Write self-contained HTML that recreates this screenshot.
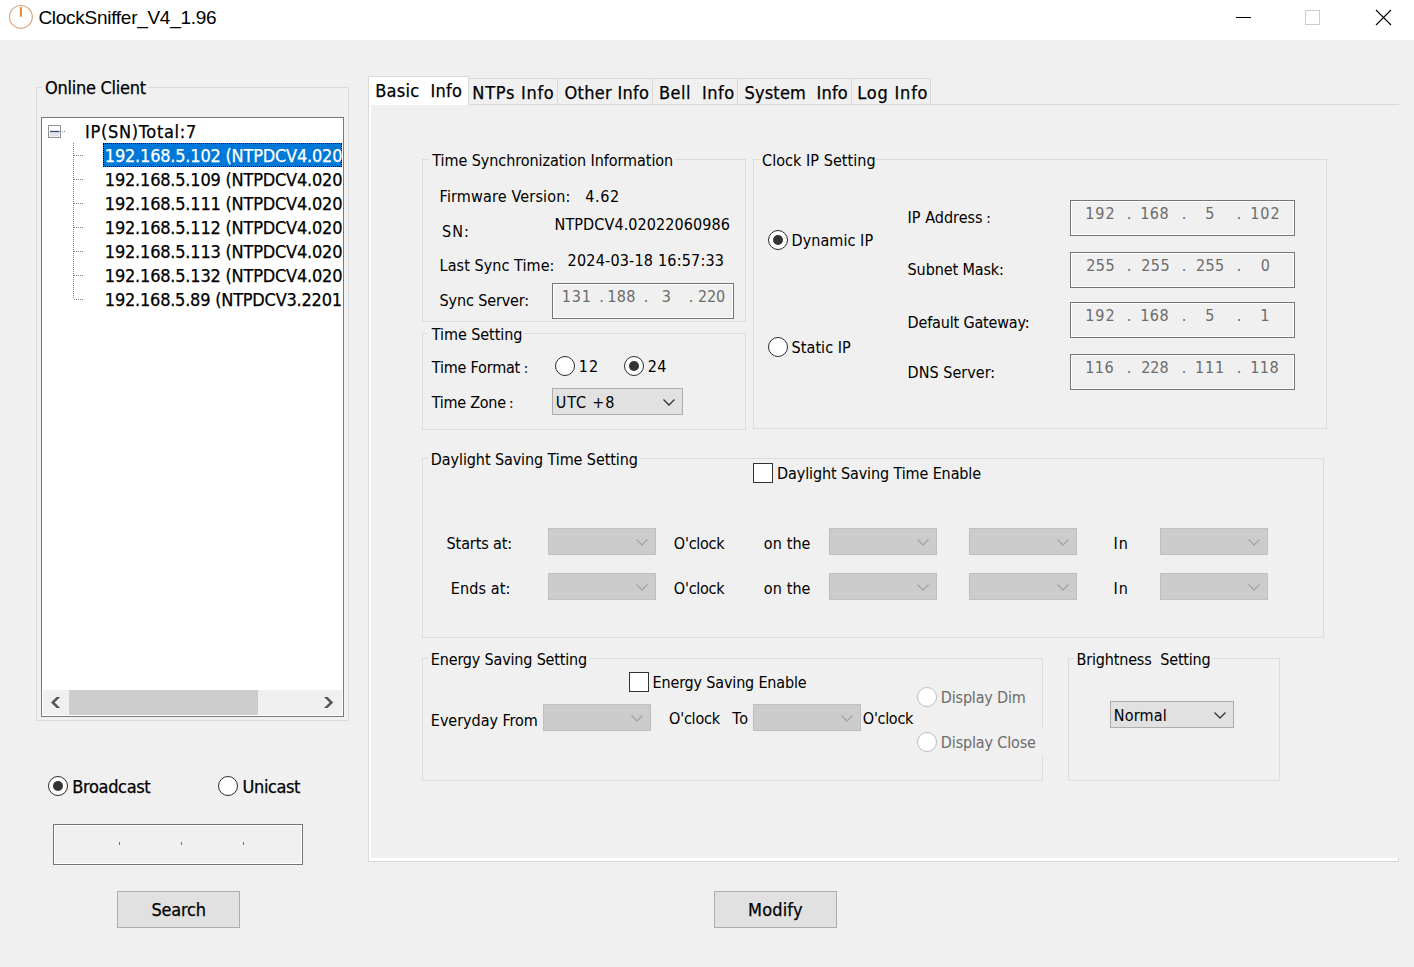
<!DOCTYPE html>
<html lang="en"><head><meta charset="utf-8"><title>ClockSniffer_V4_1.96</title>
<style>
html,body{margin:0;padding:0}
body{width:1414px;height:967px;overflow:hidden;background:#f0f0f0;position:relative;font-family:'DejaVu Sans Condensed','Liberation Sans',sans-serif}
.abs,.t,.grp,.cut,.radio,.chk,.combo,.ipbox,.btn,.tab,.line,.tree,.sel,.titlebar,.sb,.thumb{position:absolute;box-sizing:border-box}
.t{white-space:pre;line-height:24px}
.titlebar{left:0;top:0;width:1414px;height:40px;background:#fff}
.grp{border:1px solid #dcdcdc}
.cut{background:#f0f0f0}
.radio{width:20px;height:20px;border-radius:50%;border:1.25px solid #2b2b2b;background:#fff}
.radio.on::after{content:"";position:absolute;left:3.75px;top:3.75px;width:10px;height:10px;border-radius:50%;background:#333}
.radio.dis{border-color:#bcbcbc}
.chk{width:20px;height:20px;border:1px solid #333;background:#fff}
.combo{background:#e1e1e1;border:1px solid #adadad}
.combo.dis{background:#ccc;border:1px solid #bfbfbf}
.ipbox{border:1px solid #767676;background:#f0f0f0;box-shadow:inset 0 0 0 1px #fff}
.btn{background:#e1e1e1;border:1px solid #adadad}
.tab{border:1px solid #d9d9d9;border-bottom:none;background:#f0f0f0}
.tab.sel{background:#fff}
.line{background:#d9d9d9}
.tree{border:1px solid #7a7a7a;background:#fff;overflow:hidden}
.sel{background:#0078d7}
</style></head><body>

<div class="titlebar"></div>
<svg class="abs" style="left:6px;top:3px" width="30" height="30" viewBox="6 3 30 30"><circle cx="20.9" cy="16.9" r="11.4" fill="none" stroke="#dfa273" stroke-width="1.15"/><path d="M20.9 7.1 V16.7" stroke="#e0893a" stroke-width="2" fill="none"/></svg>
<span class="t " id="title" style="left:38.40px;top:6.00px;font-size:19px;letter-spacing:-0.274px;color:#000;font-family:'Liberation Sans',sans-serif">ClockSniffer_V4_1.96</span>
<svg class="abs" style="left:1230px;top:5px" width="170" height="26" viewBox="0 0 170 26"><path d="M6 12.5 H21" stroke="#000" stroke-width="1"/><rect x="75.5" y="5.5" width="14" height="14" fill="none" stroke="#ccc" stroke-width="1"/><path d="M146 5 L161 20 M161 5 L146 20" stroke="#000" stroke-width="1.1"/></svg>
<div class="grp" style="left:36px;top:87px;width:313px;height:634px;"></div><div class="cut" style="left:42.4px;top:86px;width:105.7px;height:3px"></div><span class="t " id="g_online" style="left:45.00px;top:76.00px;font-size:18px;letter-spacing:-0.275px;color:#000;font-family:'DejaVu Sans Condensed','Liberation Sans','Noto Sans CJK SC',sans-serif;-webkit-text-stroke:0.25px">Online Client</span>
<div class="tree" style="left:41px;top:117px;width:303px;height:600px">
</div>
<div class="sel" style="left:103px;top:143px;width:239px;height:24px;outline:1px dotted #000;outline-offset:-1px"></div>
<svg class="abs" style="left:42px;top:118px" width="60" height="200" viewBox="42 118 60 200"><path d="M73.5 143 V299" stroke="#808080" stroke-width="1" stroke-dasharray="1 1"/><path d="M74 155.5 H84" stroke="#808080" stroke-width="1" stroke-dasharray="1 1"/><path d="M74 179.5 H84" stroke="#808080" stroke-width="1" stroke-dasharray="1 1"/><path d="M74 203.5 H84" stroke="#808080" stroke-width="1" stroke-dasharray="1 1"/><path d="M74 227.5 H84" stroke="#808080" stroke-width="1" stroke-dasharray="1 1"/><path d="M74 251.5 H84" stroke="#808080" stroke-width="1" stroke-dasharray="1 1"/><path d="M74 275.5 H84" stroke="#808080" stroke-width="1" stroke-dasharray="1 1"/><path d="M74 299.5 H84" stroke="#808080" stroke-width="1" stroke-dasharray="1 1"/><path d="M62 131.5 H66" stroke="#808080" stroke-width="1" stroke-dasharray="1 1"/><rect x="48.5" y="125.5" width="12" height="12" fill="#fff" stroke="#919191"/><rect x="49.5" y="131.5" width="10" height="5" fill="#e3e3e8" stroke="none"/><path d="M50 131.5 H59.5" stroke="#3b4e7e" stroke-width="1.3"/></svg>
<span class="t " id="root" style="left:85.10px;top:120.00px;font-size:18px;letter-spacing:0.688px;color:#000;font-family:'DejaVu Sans Condensed','Liberation Sans','Noto Sans CJK SC',sans-serif;-webkit-text-stroke:0.25px">IP(SN)Total:7</span>
<div class="abs" style="left:42px;top:118px;width:300px;height:572px;overflow:hidden"><div class="abs" style="left:-42px;top:-118px">
<span class="t " id="row0" style="left:104.85px;top:144.00px;font-size:18px;letter-spacing:-0.208px;color:#fff;font-family:'DejaVu Sans Condensed','Liberation Sans','Noto Sans CJK SC',sans-serif;-webkit-text-stroke:0.25px">192.168.5.102 (NTPDCV4.02022060986)</span>
<span class="t " id="row1" style="left:104.85px;top:168.00px;font-size:18px;letter-spacing:-0.208px;color:#000;font-family:'DejaVu Sans Condensed','Liberation Sans','Noto Sans CJK SC',sans-serif;-webkit-text-stroke:0.25px">192.168.5.109 (NTPDCV4.02022060987)</span>
<span class="t " id="row2" style="left:104.85px;top:192.00px;font-size:18px;letter-spacing:-0.208px;color:#000;font-family:'DejaVu Sans Condensed','Liberation Sans','Noto Sans CJK SC',sans-serif;-webkit-text-stroke:0.25px">192.168.5.111 (NTPDCV4.02022060988)</span>
<span class="t " id="row3" style="left:104.85px;top:216.00px;font-size:18px;letter-spacing:-0.208px;color:#000;font-family:'DejaVu Sans Condensed','Liberation Sans','Noto Sans CJK SC',sans-serif;-webkit-text-stroke:0.25px">192.168.5.112 (NTPDCV4.02022060989)</span>
<span class="t " id="row4" style="left:104.85px;top:240.00px;font-size:18px;letter-spacing:-0.208px;color:#000;font-family:'DejaVu Sans Condensed','Liberation Sans','Noto Sans CJK SC',sans-serif;-webkit-text-stroke:0.25px">192.168.5.113 (NTPDCV4.02022060990)</span>
<span class="t " id="row5" style="left:104.85px;top:264.00px;font-size:18px;letter-spacing:-0.208px;color:#000;font-family:'DejaVu Sans Condensed','Liberation Sans','Noto Sans CJK SC',sans-serif;-webkit-text-stroke:0.25px">192.168.5.132 (NTPDCV4.02022060991)</span>
<span class="t " id="row6" style="left:104.85px;top:288.00px;font-size:18px;letter-spacing:-0.227px;color:#000;font-family:'DejaVu Sans Condensed','Liberation Sans','Noto Sans CJK SC',sans-serif;-webkit-text-stroke:0.25px">192.168.5.89 (NTPDCV3.22012050112)</span>
</div></div>
<div class="sb" style="left:43px;top:690px;width:299px;height:25px;background:#f0f0f0"></div>
<div class="thumb" style="left:69px;top:690px;width:189px;height:25px;background:#cdcdcd"></div>
<svg class="abs" style="left:43px;top:690px" width="299" height="25" viewBox="43 690 299 25"><polygon points="51,702.5 56.6,696.9 60.2,696.9 54.6,702.5 60.2,708.1 56.6,708.1" fill="#555"/><polygon points="333.2,702.5 327.6,696.9 324,696.9 329.6,702.5 324,708.1 327.6,708.1" fill="#555"/></svg>
<div class="radio on" style="left:48px;top:776px"></div>
<span class="t " id="broadcast" style="left:72.35px;top:775.00px;font-size:18px;letter-spacing:-0.344px;color:#000;font-family:'DejaVu Sans Condensed','Liberation Sans','Noto Sans CJK SC',sans-serif;-webkit-text-stroke:0.25px">Broadcast</span>
<div class="radio" style="left:218px;top:776px"></div>
<span class="t " id="unicast" style="left:242.60px;top:775.00px;font-size:18px;letter-spacing:-0.417px;color:#000;font-family:'DejaVu Sans Condensed','Liberation Sans','Noto Sans CJK SC',sans-serif;-webkit-text-stroke:0.25px">Unicast</span>
<div class="ipbox" style="left:53px;top:824px;width:250px;height:41px;"></div>
<div class="abs" style="left:119px;top:842px;width:1px;height:3px;background:#8a6a4a"></div>
<div class="abs" style="left:181px;top:842px;width:1px;height:3px;background:#8a6a4a"></div>
<div class="abs" style="left:243px;top:842px;width:1px;height:3px;background:#8a6a4a"></div>
<div class="btn" style="left:117px;top:891px;width:123px;height:37px;"></div>
<span class="t " id="search" style="left:151.60px;top:898.00px;font-size:18px;letter-spacing:-0.260px;color:#000;font-family:'DejaVu Sans Condensed','Liberation Sans','Noto Sans CJK SC',sans-serif;-webkit-text-stroke:0.25px">Search</span>
<div class="btn" style="left:714px;top:891px;width:123px;height:37px;"></div>
<span class="t " id="modify" style="left:748.10px;top:898.00px;font-size:18px;letter-spacing:0.150px;color:#000;font-family:'DejaVu Sans Condensed','Liberation Sans','Noto Sans CJK SC',sans-serif;-webkit-text-stroke:0.25px">Modify</span>
<div class="line" style="left:368px;top:104px;width:1031px;height:1px;"></div>
<div class="line" style="left:368px;top:104px;width:1px;height:758px;"></div>
<div class="abs" style="left:369px;top:105px;width:2px;height:756px;background:#fff"></div>
<div class="abs" style="left:369px;top:858px;width:1029px;height:3px;background:#fff"></div>
<div class="line" style="left:368px;top:861px;width:1031px;height:1px;"></div>
<div class="line" style="left:1398px;top:858px;width:1px;height:4px;"></div>
<div class="tab" style="left:467px;top:78px;width:92px;height:26px;"></div>
<div class="tab" style="left:557px;top:78px;width:97px;height:26px;"></div>
<div class="tab" style="left:652px;top:78px;width:87px;height:26px;"></div>
<div class="tab" style="left:737px;top:78px;width:116px;height:26px;"></div>
<div class="tab" style="left:851px;top:78px;width:80px;height:26px;"></div>
<div class="tab sel" style="left:368px;top:76px;width:101px;height:29px;"></div>
<span class="t " id="tab0" style="left:375.20px;top:79.00px;font-size:18px;letter-spacing:0.300px;color:#000;font-family:'DejaVu Sans Condensed','Liberation Sans','Noto Sans CJK SC',sans-serif;-webkit-text-stroke:0.25px">Basic  Info</span>
<span class="t " id="tab1" style="left:472.35px;top:81.00px;font-size:18px;letter-spacing:0.719px;color:#000;font-family:'DejaVu Sans Condensed','Liberation Sans','Noto Sans CJK SC',sans-serif;-webkit-text-stroke:0.25px">NTPs Info</span>
<span class="t " id="tab2" style="left:564.60px;top:81.00px;font-size:18px;letter-spacing:0.278px;color:#000;font-family:'DejaVu Sans Condensed','Liberation Sans','Noto Sans CJK SC',sans-serif;-webkit-text-stroke:0.25px">Other Info</span>
<span class="t " id="tab3" style="left:659.00px;top:81.00px;font-size:18px;letter-spacing:0.456px;color:#000;font-family:'DejaVu Sans Condensed','Liberation Sans','Noto Sans CJK SC',sans-serif;-webkit-text-stroke:0.25px">Bell  Info</span>
<span class="t " id="tab4" style="left:744.60px;top:81.00px;font-size:18px;letter-spacing:0.159px;color:#000;font-family:'DejaVu Sans Condensed','Liberation Sans','Noto Sans CJK SC',sans-serif;-webkit-text-stroke:0.25px">System  Info</span>
<span class="t " id="tab5" style="left:857.35px;top:81.00px;font-size:18px;letter-spacing:0.786px;color:#000;font-family:'DejaVu Sans Condensed','Liberation Sans','Noto Sans CJK SC',sans-serif;-webkit-text-stroke:0.25px">Log Info</span>
<div class="grp" style="left:422px;top:159px;width:324px;height:163px;"></div><div class="cut" style="left:428.75px;top:158px;width:246px;height:3px"></div><span class="t " id="g_sync" style="left:432.35px;top:149.00px;font-size:16px;letter-spacing:-0.065px;color:#000;font-family:'DejaVu Sans Condensed','Liberation Sans','Noto Sans CJK SC',sans-serif;-webkit-text-stroke:0.04px">Time Synchronization Information</span>
<span class="t " id="fw" style="left:439.60px;top:185.00px;font-size:16px;letter-spacing:0.172px;color:#000;font-family:'DejaVu Sans Condensed','Liberation Sans','Noto Sans CJK SC',sans-serif;-webkit-text-stroke:0.04px">Firmware Version:</span>
<span class="t " id="fwv" style="left:585.35px;top:185.00px;font-size:16px;letter-spacing:0.583px;color:#000;font-family:'DejaVu Sans Condensed','Liberation Sans','Noto Sans CJK SC',sans-serif;-webkit-text-stroke:0.04px">4.62</span>
<span class="t " id="sn" style="left:442.10px;top:220.00px;font-size:16px;letter-spacing:1.000px;color:#000;font-family:'DejaVu Sans Condensed','Liberation Sans','Noto Sans CJK SC',sans-serif;-webkit-text-stroke:0.04px">SN:</span>
<span class="t " id="snv" style="left:554.60px;top:213.00px;font-size:16px;letter-spacing:0.097px;color:#000;font-family:'DejaVu Sans Condensed','Liberation Sans','Noto Sans CJK SC',sans-serif;-webkit-text-stroke:0.04px">NTPDCV4.02022060986</span>
<span class="t " id="lst" style="left:439.60px;top:254.00px;font-size:16px;letter-spacing:0.071px;color:#000;font-family:'DejaVu Sans Condensed','Liberation Sans','Noto Sans CJK SC',sans-serif;-webkit-text-stroke:0.04px">Last Sync Time:</span>
<span class="t " id="lstv" style="left:567.60px;top:249.00px;font-size:16px;letter-spacing:0.194px;color:#000;font-family:'DejaVu Sans Condensed','Liberation Sans','Noto Sans CJK SC',sans-serif;-webkit-text-stroke:0.04px">2024-03-18 16:57:33</span>
<span class="t " id="ss" style="left:439.60px;top:289.00px;font-size:16px;letter-spacing:-0.136px;color:#000;font-family:'DejaVu Sans Condensed','Liberation Sans','Noto Sans CJK SC',sans-serif;-webkit-text-stroke:0.04px">Sync Server:</span>
<div class="ipbox" style="left:552px;top:283px;width:182px;height:36px;"></div><span class="t " id="sip_0" style="left:561.73px;top:285.00px;font-size:16px;letter-spacing:0.875px;color:#6d6d6d;font-family:'DejaVu Sans Condensed','Liberation Sans','Noto Sans CJK SC',sans-serif;-webkit-text-stroke:0.04px">131</span><span class="t " id="sip_1" style="left:607.23px;top:285.00px;font-size:16px;letter-spacing:0.375px;color:#6d6d6d;font-family:'DejaVu Sans Condensed','Liberation Sans','Noto Sans CJK SC',sans-serif;-webkit-text-stroke:0.04px">188</span><span class="t " id="sip_2" style="left:661.85px;top:285.00px;font-size:16px;letter-spacing:0.000px;color:#6d6d6d;font-family:'DejaVu Sans Condensed','Liberation Sans','Noto Sans CJK SC',sans-serif;-webkit-text-stroke:0.04px">3</span><span class="t " id="sip_3" style="left:697.98px;top:285.00px;font-size:16px;letter-spacing:-0.125px;color:#6d6d6d;font-family:'DejaVu Sans Condensed','Liberation Sans','Noto Sans CJK SC',sans-serif;-webkit-text-stroke:0.04px">220</span><span class="t " id="sip_d0" style="left:599.35px;top:285.00px;font-size:16px;letter-spacing:0.000px;color:#6d6d6d;font-family:'DejaVu Sans Condensed','Liberation Sans','Noto Sans CJK SC',sans-serif;-webkit-text-stroke:0.04px">.</span><span class="t " id="sip_d1" style="left:643.85px;top:285.00px;font-size:16px;letter-spacing:0.000px;color:#6d6d6d;font-family:'DejaVu Sans Condensed','Liberation Sans','Noto Sans CJK SC',sans-serif;-webkit-text-stroke:0.04px">.</span><span class="t " id="sip_d2" style="left:688.85px;top:285.00px;font-size:16px;letter-spacing:0.000px;color:#6d6d6d;font-family:'DejaVu Sans Condensed','Liberation Sans','Noto Sans CJK SC',sans-serif;-webkit-text-stroke:0.04px">.</span>
<div class="grp" style="left:422px;top:333px;width:324px;height:97px;"></div><div class="cut" style="left:428.25px;top:332px;width:95.25px;height:3px"></div><span class="t " id="g_time" style="left:431.85px;top:323.00px;font-size:16px;letter-spacing:-0.068px;color:#000;font-family:'DejaVu Sans Condensed','Liberation Sans','Noto Sans CJK SC',sans-serif;-webkit-text-stroke:0.04px">Time Setting</span>
<span class="t " id="tf" style="left:431.85px;top:356.00px;font-size:16px;letter-spacing:-0.200px;color:#000;font-family:'DejaVu Sans Condensed','Liberation Sans','Noto Sans CJK SC',sans-serif;-webkit-text-stroke:0.04px">Time Format</span>
<span class="t " id="tf_c" style="left:523.45px;top:358.00px;font-size:10px;letter-spacing:0.000px;color:#000;font-family:'Liberation Sans','Noto Sans CJK SC',sans-serif;font-weight:700">：</span>
<div class="radio" style="left:555px;top:356px"></div>
<span class="t " id="t12" style="left:578.73px;top:355.00px;font-size:16px;letter-spacing:1.000px;color:#000;font-family:'DejaVu Sans Condensed','Liberation Sans','Noto Sans CJK SC',sans-serif;-webkit-text-stroke:0.04px">12</span>
<div class="radio on" style="left:624px;top:356px"></div>
<span class="t " id="t24" style="left:647.85px;top:355.00px;font-size:16px;letter-spacing:0.250px;color:#000;font-family:'DejaVu Sans Condensed','Liberation Sans','Noto Sans CJK SC',sans-serif;-webkit-text-stroke:0.04px">24</span>
<span class="t " id="tz" style="left:431.85px;top:391.00px;font-size:16px;letter-spacing:-0.281px;color:#000;font-family:'DejaVu Sans Condensed','Liberation Sans','Noto Sans CJK SC',sans-serif;-webkit-text-stroke:0.04px">Time Zone</span>
<span class="t " id="tz_c" style="left:508.70px;top:393.00px;font-size:10px;letter-spacing:0.000px;color:#000;font-family:'Liberation Sans','Noto Sans CJK SC',sans-serif;font-weight:700">：</span>
<div class="combo" style="left:552px;top:388px;width:131px;height:27px;"></div><svg class="abs" style="left:662px;top:397.5px" width="14" height="9" viewBox="0 0 14 9"><path d="M1.5 1.5 L7 7 L12.5 1.5" fill="none" stroke="#333" stroke-width="1.3"/></svg><span class="t " id="utc" style="left:555.85px;top:391.00px;font-size:16px;letter-spacing:0.850px;color:#000;font-family:'DejaVu Sans Condensed','Liberation Sans','Noto Sans CJK SC',sans-serif;-webkit-text-stroke:0.04px">UTC +8</span>
<div class="grp" style="left:753px;top:159px;width:574px;height:270px;"></div><div class="cut" style="left:759.5px;top:158px;width:116.75px;height:3px"></div><span class="t " id="g_clock" style="left:762.10px;top:149.00px;font-size:16px;letter-spacing:0.050px;color:#000;font-family:'DejaVu Sans Condensed','Liberation Sans','Noto Sans CJK SC',sans-serif;-webkit-text-stroke:0.04px">Clock IP Setting</span>
<div class="radio on" style="left:768px;top:230px"></div>
<span class="t " id="dyn" style="left:791.60px;top:229.00px;font-size:16px;letter-spacing:0.056px;color:#000;font-family:'DejaVu Sans Condensed','Liberation Sans','Noto Sans CJK SC',sans-serif;-webkit-text-stroke:0.04px">Dynamic IP</span>
<div class="radio" style="left:768px;top:337px"></div>
<span class="t " id="sta" style="left:791.60px;top:336.00px;font-size:16px;letter-spacing:0.062px;color:#000;font-family:'DejaVu Sans Condensed','Liberation Sans','Noto Sans CJK SC',sans-serif;-webkit-text-stroke:0.04px">Static IP</span>
<span class="t " id="ipa" style="left:907.60px;top:206.00px;font-size:16px;letter-spacing:0.028px;color:#000;font-family:'DejaVu Sans Condensed','Liberation Sans','Noto Sans CJK SC',sans-serif;-webkit-text-stroke:0.04px">IP Address</span>
<span class="t " id="ipa_c" style="left:986.10px;top:208.00px;font-size:10px;letter-spacing:0.000px;color:#000;font-family:'Liberation Sans','Noto Sans CJK SC',sans-serif;font-weight:700">：</span>
<span class="t " id="snm" style="left:907.60px;top:258.00px;font-size:16px;letter-spacing:-0.114px;color:#000;font-family:'DejaVu Sans Condensed','Liberation Sans','Noto Sans CJK SC',sans-serif;-webkit-text-stroke:0.04px">Subnet Mask:</span>
<span class="t " id="dgw" style="left:907.60px;top:311.00px;font-size:16px;letter-spacing:-0.167px;color:#000;font-family:'DejaVu Sans Condensed','Liberation Sans','Noto Sans CJK SC',sans-serif;-webkit-text-stroke:0.04px">Default Gateway:</span>
<span class="t " id="dns" style="left:907.60px;top:361.00px;font-size:16px;letter-spacing:0.025px;color:#000;font-family:'DejaVu Sans Condensed','Liberation Sans','Noto Sans CJK SC',sans-serif;-webkit-text-stroke:0.04px">DNS Server:</span>
<div class="ipbox" style="left:1070px;top:200px;width:225px;height:36px;"></div><span class="t " id="ip1_0" style="left:1085.32px;top:202.00px;font-size:16px;letter-spacing:0.875px;color:#6d6d6d;font-family:'DejaVu Sans Condensed','Liberation Sans','Noto Sans CJK SC',sans-serif;-webkit-text-stroke:0.04px">192</span><span class="t " id="ip1_1" style="left:1140.32px;top:202.00px;font-size:16px;letter-spacing:0.375px;color:#6d6d6d;font-family:'DejaVu Sans Condensed','Liberation Sans','Noto Sans CJK SC',sans-serif;-webkit-text-stroke:0.04px">168</span><span class="t " id="ip1_2" style="left:1205.35px;top:202.00px;font-size:16px;letter-spacing:0.000px;color:#6d6d6d;font-family:'DejaVu Sans Condensed','Liberation Sans','Noto Sans CJK SC',sans-serif;-webkit-text-stroke:0.04px">5</span><span class="t " id="ip1_3" style="left:1250.32px;top:202.00px;font-size:16px;letter-spacing:0.875px;color:#6d6d6d;font-family:'DejaVu Sans Condensed','Liberation Sans','Noto Sans CJK SC',sans-serif;-webkit-text-stroke:0.04px">102</span><span class="t " id="ip1_d0" style="left:1126.85px;top:202.00px;font-size:16px;letter-spacing:0.000px;color:#6d6d6d;font-family:'DejaVu Sans Condensed','Liberation Sans','Noto Sans CJK SC',sans-serif;-webkit-text-stroke:0.04px">.</span><span class="t " id="ip1_d1" style="left:1181.85px;top:202.00px;font-size:16px;letter-spacing:0.000px;color:#6d6d6d;font-family:'DejaVu Sans Condensed','Liberation Sans','Noto Sans CJK SC',sans-serif;-webkit-text-stroke:0.04px">.</span><span class="t " id="ip1_d2" style="left:1236.85px;top:202.00px;font-size:16px;letter-spacing:0.000px;color:#6d6d6d;font-family:'DejaVu Sans Condensed','Liberation Sans','Noto Sans CJK SC',sans-serif;-webkit-text-stroke:0.04px">.</span>
<div class="ipbox" style="left:1070px;top:252px;width:225px;height:36px;"></div><span class="t " id="ip2_0" style="left:1086.32px;top:254.00px;font-size:16px;letter-spacing:0.375px;color:#6d6d6d;font-family:'DejaVu Sans Condensed','Liberation Sans','Noto Sans CJK SC',sans-serif;-webkit-text-stroke:0.04px">255</span><span class="t " id="ip2_1" style="left:1141.32px;top:254.00px;font-size:16px;letter-spacing:0.375px;color:#6d6d6d;font-family:'DejaVu Sans Condensed','Liberation Sans','Noto Sans CJK SC',sans-serif;-webkit-text-stroke:0.04px">255</span><span class="t " id="ip2_2" style="left:1195.97px;top:254.00px;font-size:16px;letter-spacing:0.375px;color:#6d6d6d;font-family:'DejaVu Sans Condensed','Liberation Sans','Noto Sans CJK SC',sans-serif;-webkit-text-stroke:0.04px">255</span><span class="t " id="ip2_3" style="left:1260.70px;top:254.00px;font-size:16px;letter-spacing:0.000px;color:#6d6d6d;font-family:'DejaVu Sans Condensed','Liberation Sans','Noto Sans CJK SC',sans-serif;-webkit-text-stroke:0.04px">0</span><span class="t " id="ip2_d0" style="left:1126.85px;top:254.00px;font-size:16px;letter-spacing:0.000px;color:#6d6d6d;font-family:'DejaVu Sans Condensed','Liberation Sans','Noto Sans CJK SC',sans-serif;-webkit-text-stroke:0.04px">.</span><span class="t " id="ip2_d1" style="left:1181.85px;top:254.00px;font-size:16px;letter-spacing:0.000px;color:#6d6d6d;font-family:'DejaVu Sans Condensed','Liberation Sans','Noto Sans CJK SC',sans-serif;-webkit-text-stroke:0.04px">.</span><span class="t " id="ip2_d2" style="left:1236.85px;top:254.00px;font-size:16px;letter-spacing:0.000px;color:#6d6d6d;font-family:'DejaVu Sans Condensed','Liberation Sans','Noto Sans CJK SC',sans-serif;-webkit-text-stroke:0.04px">.</span>
<div class="ipbox" style="left:1070px;top:302px;width:225px;height:36px;"></div><span class="t " id="ip3_0" style="left:1085.32px;top:304.00px;font-size:16px;letter-spacing:0.875px;color:#6d6d6d;font-family:'DejaVu Sans Condensed','Liberation Sans','Noto Sans CJK SC',sans-serif;-webkit-text-stroke:0.04px">192</span><span class="t " id="ip3_1" style="left:1140.32px;top:304.00px;font-size:16px;letter-spacing:0.375px;color:#6d6d6d;font-family:'DejaVu Sans Condensed','Liberation Sans','Noto Sans CJK SC',sans-serif;-webkit-text-stroke:0.04px">168</span><span class="t " id="ip3_2" style="left:1205.35px;top:304.00px;font-size:16px;letter-spacing:0.000px;color:#6d6d6d;font-family:'DejaVu Sans Condensed','Liberation Sans','Noto Sans CJK SC',sans-serif;-webkit-text-stroke:0.04px">5</span><span class="t " id="ip3_3" style="left:1260.20px;top:304.00px;font-size:16px;letter-spacing:0.000px;color:#6d6d6d;font-family:'DejaVu Sans Condensed','Liberation Sans','Noto Sans CJK SC',sans-serif;-webkit-text-stroke:0.04px">1</span><span class="t " id="ip3_d0" style="left:1126.85px;top:304.00px;font-size:16px;letter-spacing:0.000px;color:#6d6d6d;font-family:'DejaVu Sans Condensed','Liberation Sans','Noto Sans CJK SC',sans-serif;-webkit-text-stroke:0.04px">.</span><span class="t " id="ip3_d1" style="left:1181.85px;top:304.00px;font-size:16px;letter-spacing:0.000px;color:#6d6d6d;font-family:'DejaVu Sans Condensed','Liberation Sans','Noto Sans CJK SC',sans-serif;-webkit-text-stroke:0.04px">.</span><span class="t " id="ip3_d2" style="left:1236.85px;top:304.00px;font-size:16px;letter-spacing:0.000px;color:#6d6d6d;font-family:'DejaVu Sans Condensed','Liberation Sans','Noto Sans CJK SC',sans-serif;-webkit-text-stroke:0.04px">.</span>
<div class="ipbox" style="left:1070px;top:354px;width:225px;height:36px;"></div><span class="t " id="ip4_0" style="left:1085.32px;top:356.00px;font-size:16px;letter-spacing:0.375px;color:#6d6d6d;font-family:'DejaVu Sans Condensed','Liberation Sans','Noto Sans CJK SC',sans-serif;-webkit-text-stroke:0.04px">116</span><span class="t " id="ip4_1" style="left:1141.32px;top:356.00px;font-size:16px;letter-spacing:-0.125px;color:#6d6d6d;font-family:'DejaVu Sans Condensed','Liberation Sans','Noto Sans CJK SC',sans-serif;-webkit-text-stroke:0.04px">228</span><span class="t " id="ip4_2" style="left:1194.97px;top:356.00px;font-size:16px;letter-spacing:0.875px;color:#6d6d6d;font-family:'DejaVu Sans Condensed','Liberation Sans','Noto Sans CJK SC',sans-serif;-webkit-text-stroke:0.04px">111</span><span class="t " id="ip4_3" style="left:1250.32px;top:356.00px;font-size:16px;letter-spacing:0.375px;color:#6d6d6d;font-family:'DejaVu Sans Condensed','Liberation Sans','Noto Sans CJK SC',sans-serif;-webkit-text-stroke:0.04px">118</span><span class="t " id="ip4_d0" style="left:1126.85px;top:356.00px;font-size:16px;letter-spacing:0.000px;color:#6d6d6d;font-family:'DejaVu Sans Condensed','Liberation Sans','Noto Sans CJK SC',sans-serif;-webkit-text-stroke:0.04px">.</span><span class="t " id="ip4_d1" style="left:1181.85px;top:356.00px;font-size:16px;letter-spacing:0.000px;color:#6d6d6d;font-family:'DejaVu Sans Condensed','Liberation Sans','Noto Sans CJK SC',sans-serif;-webkit-text-stroke:0.04px">.</span><span class="t " id="ip4_d2" style="left:1236.85px;top:356.00px;font-size:16px;letter-spacing:0.000px;color:#6d6d6d;font-family:'DejaVu Sans Condensed','Liberation Sans','Noto Sans CJK SC',sans-serif;-webkit-text-stroke:0.04px">.</span>
<div class="grp" style="left:422px;top:458px;width:902px;height:180px;"></div><div class="cut" style="left:428.25px;top:457px;width:210.5px;height:3px"></div><span class="t " id="g_dst" style="left:430.85px;top:448.00px;font-size:16px;letter-spacing:-0.093px;color:#000;font-family:'DejaVu Sans Condensed','Liberation Sans','Noto Sans CJK SC',sans-serif;-webkit-text-stroke:0.04px">Daylight Saving Time Setting</span>
<div class="chk" style="left:753px;top:463px"></div>
<span class="t " id="dste" style="left:777.10px;top:462.00px;font-size:16px;letter-spacing:-0.115px;color:#000;font-family:'DejaVu Sans Condensed','Liberation Sans','Noto Sans CJK SC',sans-serif;-webkit-text-stroke:0.04px">Daylight Saving Time Enable</span>
<span class="t " id="st" style="left:446.60px;top:532.00px;font-size:16px;letter-spacing:-0.111px;color:#000;font-family:'DejaVu Sans Condensed','Liberation Sans','Noto Sans CJK SC',sans-serif;-webkit-text-stroke:0.04px">Starts at:</span>
<span class="t " id="oc1" style="left:673.85px;top:532.00px;font-size:16px;letter-spacing:-0.250px;color:#000;font-family:'DejaVu Sans Condensed','Liberation Sans','Noto Sans CJK SC',sans-serif;-webkit-text-stroke:0.04px">O&#x27;clock</span>
<span class="t " id="on1" style="left:763.85px;top:532.00px;font-size:16px;letter-spacing:0.100px;color:#000;font-family:'DejaVu Sans Condensed','Liberation Sans','Noto Sans CJK SC',sans-serif;-webkit-text-stroke:0.04px">on the</span>
<span class="t " id="in1" style="left:1113.60px;top:532.00px;font-size:16px;letter-spacing:1.000px;color:#000;font-family:'DejaVu Sans Condensed','Liberation Sans','Noto Sans CJK SC',sans-serif;-webkit-text-stroke:0.04px">In</span>
<div class="combo dis" style="left:548px;top:528px;width:108px;height:27px;"></div><svg class="abs" style="left:635px;top:537.5px" width="14" height="9" viewBox="0 0 14 9"><path d="M1.5 1.5 L7 7 L12.5 1.5" fill="none" stroke="#a3a3a3" stroke-width="1.3"/></svg>
<div class="combo dis" style="left:829px;top:528px;width:108px;height:27px;"></div><svg class="abs" style="left:916px;top:537.5px" width="14" height="9" viewBox="0 0 14 9"><path d="M1.5 1.5 L7 7 L12.5 1.5" fill="none" stroke="#a3a3a3" stroke-width="1.3"/></svg>
<div class="combo dis" style="left:968.5px;top:528px;width:108.5px;height:27px;"></div><svg class="abs" style="left:1056px;top:537.5px" width="14" height="9" viewBox="0 0 14 9"><path d="M1.5 1.5 L7 7 L12.5 1.5" fill="none" stroke="#a3a3a3" stroke-width="1.3"/></svg>
<div class="combo dis" style="left:1160px;top:528px;width:108px;height:27px;"></div><svg class="abs" style="left:1247px;top:537.5px" width="14" height="9" viewBox="0 0 14 9"><path d="M1.5 1.5 L7 7 L12.5 1.5" fill="none" stroke="#a3a3a3" stroke-width="1.3"/></svg>
<span class="t " id="en" style="left:450.85px;top:577.00px;font-size:16px;letter-spacing:0.107px;color:#000;font-family:'DejaVu Sans Condensed','Liberation Sans','Noto Sans CJK SC',sans-serif;-webkit-text-stroke:0.04px">Ends at:</span>
<span class="t " id="oc2" style="left:673.85px;top:577.00px;font-size:16px;letter-spacing:-0.250px;color:#000;font-family:'DejaVu Sans Condensed','Liberation Sans','Noto Sans CJK SC',sans-serif;-webkit-text-stroke:0.04px">O&#x27;clock</span>
<span class="t " id="on2" style="left:763.85px;top:577.00px;font-size:16px;letter-spacing:0.100px;color:#000;font-family:'DejaVu Sans Condensed','Liberation Sans','Noto Sans CJK SC',sans-serif;-webkit-text-stroke:0.04px">on the</span>
<span class="t " id="in2" style="left:1113.60px;top:577.00px;font-size:16px;letter-spacing:1.000px;color:#000;font-family:'DejaVu Sans Condensed','Liberation Sans','Noto Sans CJK SC',sans-serif;-webkit-text-stroke:0.04px">In</span>
<div class="combo dis" style="left:548px;top:573px;width:108px;height:27px;"></div><svg class="abs" style="left:635px;top:582.5px" width="14" height="9" viewBox="0 0 14 9"><path d="M1.5 1.5 L7 7 L12.5 1.5" fill="none" stroke="#a3a3a3" stroke-width="1.3"/></svg>
<div class="combo dis" style="left:829px;top:573px;width:108px;height:27px;"></div><svg class="abs" style="left:916px;top:582.5px" width="14" height="9" viewBox="0 0 14 9"><path d="M1.5 1.5 L7 7 L12.5 1.5" fill="none" stroke="#a3a3a3" stroke-width="1.3"/></svg>
<div class="combo dis" style="left:968.5px;top:573px;width:108.5px;height:27px;"></div><svg class="abs" style="left:1056px;top:582.5px" width="14" height="9" viewBox="0 0 14 9"><path d="M1.5 1.5 L7 7 L12.5 1.5" fill="none" stroke="#a3a3a3" stroke-width="1.3"/></svg>
<div class="combo dis" style="left:1160px;top:573px;width:108px;height:27px;"></div><svg class="abs" style="left:1247px;top:582.5px" width="14" height="9" viewBox="0 0 14 9"><path d="M1.5 1.5 L7 7 L12.5 1.5" fill="none" stroke="#a3a3a3" stroke-width="1.3"/></svg>
<div class="grp" style="left:422px;top:658px;width:621px;height:123px;"></div><div class="cut" style="left:428.25px;top:657px;width:160.5px;height:3px"></div><span class="t " id="g_en" style="left:430.85px;top:648.00px;font-size:16px;letter-spacing:-0.175px;color:#000;font-family:'DejaVu Sans Condensed','Liberation Sans','Noto Sans CJK SC',sans-serif;-webkit-text-stroke:0.04px">Energy Saving Setting</span>
<div class="chk" style="left:629px;top:672px"></div>
<span class="t " id="ene" style="left:652.60px;top:671.00px;font-size:16px;letter-spacing:-0.171px;color:#000;font-family:'DejaVu Sans Condensed','Liberation Sans','Noto Sans CJK SC',sans-serif;-webkit-text-stroke:0.04px">Energy Saving Enable</span>
<span class="t " id="evf" style="left:430.85px;top:709.00px;font-size:16px;letter-spacing:-0.042px;color:#000;font-family:'DejaVu Sans Condensed','Liberation Sans','Noto Sans CJK SC',sans-serif;-webkit-text-stroke:0.04px">Everyday From</span>
<div class="combo dis" style="left:543px;top:704px;width:108px;height:27px;"></div><svg class="abs" style="left:630px;top:713.5px" width="14" height="9" viewBox="0 0 14 9"><path d="M1.5 1.5 L7 7 L12.5 1.5" fill="none" stroke="#a3a3a3" stroke-width="1.3"/></svg>
<span class="t " id="oc3" style="left:669.00px;top:707.00px;font-size:16px;letter-spacing:-0.200px;color:#000;font-family:'DejaVu Sans Condensed','Liberation Sans','Noto Sans CJK SC',sans-serif;-webkit-text-stroke:0.04px">O&#x27;clock</span>
<span class="t " id="to" style="left:732.23px;top:707.00px;font-size:16px;letter-spacing:1.000px;color:#000;font-family:'DejaVu Sans Condensed','Liberation Sans','Noto Sans CJK SC',sans-serif;-webkit-text-stroke:0.04px">To</span>
<div class="combo dis" style="left:753px;top:704px;width:108px;height:27px;"></div><svg class="abs" style="left:840px;top:713.5px" width="14" height="9" viewBox="0 0 14 9"><path d="M1.5 1.5 L7 7 L12.5 1.5" fill="none" stroke="#a3a3a3" stroke-width="1.3"/></svg>
<span class="t " id="oc4" style="left:862.85px;top:707.00px;font-size:16px;letter-spacing:-0.292px;color:#000;font-family:'DejaVu Sans Condensed','Liberation Sans','Noto Sans CJK SC',sans-serif;-webkit-text-stroke:0.04px">O&#x27;clock</span>
<div class="abs" style="left:1040px;top:729px;width:6px;height:25px;background:#f0f0f0"></div>
<div class="radio dis" style="left:917px;top:687px"></div>
<span class="t " id="ddim" style="left:940.85px;top:686.00px;font-size:16px;letter-spacing:-0.175px;color:#6d6d6d;font-family:'DejaVu Sans Condensed','Liberation Sans','Noto Sans CJK SC',sans-serif;-webkit-text-stroke:0.04px">Display Dim</span>
<div class="radio dis" style="left:917px;top:732px"></div>
<span class="t " id="dclose" style="left:940.85px;top:731.00px;font-size:16px;letter-spacing:-0.146px;color:#6d6d6d;font-family:'DejaVu Sans Condensed','Liberation Sans','Noto Sans CJK SC',sans-serif;-webkit-text-stroke:0.04px">Display Close</span>
<div class="grp" style="left:1068px;top:658px;width:212px;height:123px;"></div><div class="cut" style="left:1074px;top:657px;width:137.75px;height:3px"></div><span class="t " id="g_br" style="left:1076.60px;top:648.00px;font-size:16px;letter-spacing:-0.181px;color:#000;font-family:'DejaVu Sans Condensed','Liberation Sans','Noto Sans CJK SC',sans-serif;-webkit-text-stroke:0.04px">Brightness  Setting</span>
<div class="combo" style="left:1110px;top:701px;width:124px;height:27px;"></div><svg class="abs" style="left:1213px;top:710.5px" width="14" height="9" viewBox="0 0 14 9"><path d="M1.5 1.5 L7 7 L12.5 1.5" fill="none" stroke="#333" stroke-width="1.3"/></svg><span class="t " id="normal" style="left:1113.85px;top:704.00px;font-size:16px;letter-spacing:0.150px;color:#000;font-family:'DejaVu Sans Condensed','Liberation Sans','Noto Sans CJK SC',sans-serif;-webkit-text-stroke:0.04px">Normal</span>
</body></html>
